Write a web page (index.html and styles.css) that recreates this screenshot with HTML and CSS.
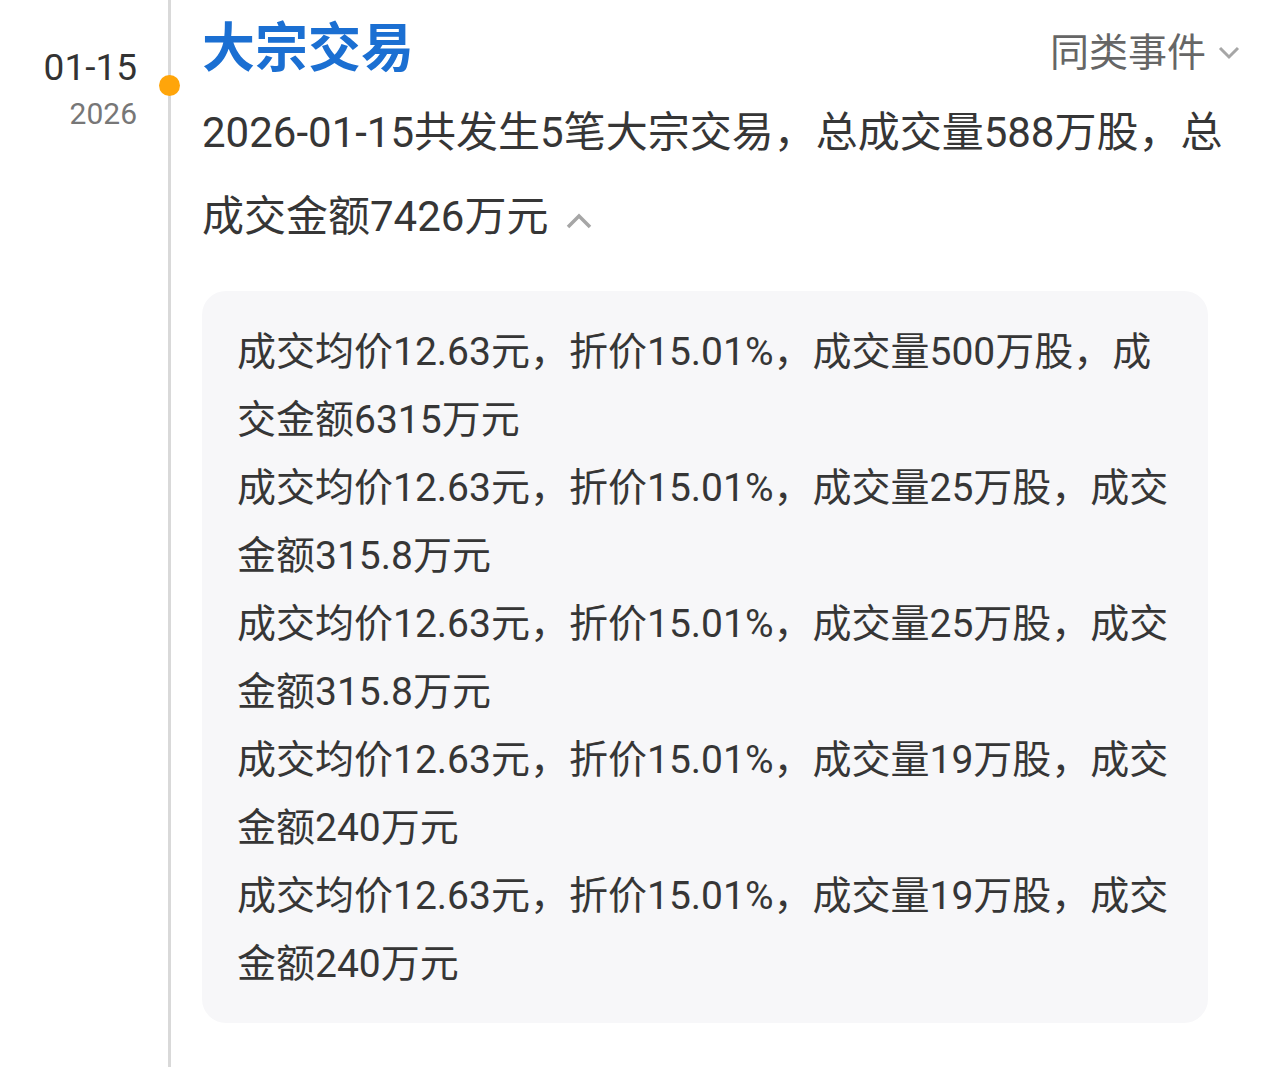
FILE: index.html
```html
<!DOCTYPE html>
<html lang="zh-CN">
<head>
<meta charset="utf-8">
<title>大宗交易</title>
<link rel="stylesheet" href="styles.css">
</head>
<body>
<div class="item">
  <div class="date-col">
    <div class="date-md">01-15</div>
    <div class="date-y">2026</div>
  </div>
  <div class="rail"><span class="dot"></span></div>
  <div class="content">
    <div class="header">
      <h1 class="title">大宗交易</h1>
      <div class="similar">同类事件<svg class="chev-down" width="22" height="14" viewBox="0 0 22 14"><path d="M2 2 L11 11 L20 2" fill="none" stroke="#a6a6a6" stroke-width="3"/></svg></div>
    </div>
    <p class="desc">2026-01-15共发生5笔大宗交易，总成交量588万股，总成交金额7426万元<svg class="chev-up" width="26" height="16" viewBox="0 0 26 16"><path d="M2 14 L13 3 L24 14" fill="none" stroke="#a6a6a6" stroke-width="3.5"/></svg></p>
    <div class="detail">
      <p class="trade">成交均价12.63元，折价15.01%，成交量500万股，成交金额6315万元</p>
      <p class="trade">成交均价12.63元，折价15.01%，成交量25万股，成交金额315.8万元</p>
      <p class="trade">成交均价12.63元，折价15.01%，成交量25万股，成交金额315.8万元</p>
      <p class="trade">成交均价12.63元，折价15.01%，成交量19万股，成交金额240万元</p>
      <p class="trade">成交均价12.63元，折价15.01%，成交量19万股，成交金额240万元</p>
    </div>
  </div>
</div>
</body>
</html>
```
FILE: styles.css
```css
html, body {
  margin: 0;
  padding: 0;
  background: #ffffff;
}
body {
  font-family: Roboto, "Noto Sans CJK SC", sans-serif;
  color: #363636;
}
.item {
  display: flex;
  min-height: 1067px;
}
.date-col {
  width: 137px;
  flex: none;
  text-align: right;
  padding-top: 46px;
}
.date-md {
  font-size: 37px;
  line-height: 44px;
  color: #333333;
}
.date-y {
  font-size: 30px;
  line-height: 40px;
  margin-top: 4px;
  color: #777777;
}
.rail {
  width: 64px;
  flex: none;
  display: flex;
  flex-direction: column;
  align-items: center;
  background: linear-gradient(#d9d9d9, #d9d9d9) no-repeat center top / 3px 100%;
}
.dot {
  display: block;
  width: 21px;
  height: 21px;
  border-radius: 50%;
  background: #ffa50a;
  margin-top: 75px;
}
.content {
  flex: 1;
  padding: 19px 40px 0 1px;
}
.header {
  display: flex;
  justify-content: space-between;
  align-items: center;
  height: 60px;
}
.title {
  margin: 0;
  font-size: 53px;
  line-height: 60px;
  font-weight: 700;
  color: #1b6fd2;
}
.similar {
  display: flex;
  align-items: center;
  gap: 12px;
  font-size: 39px;
  line-height: 50px;
  color: #666666;
  padding-top: 8px;
}
.desc {
  margin: 12px 0 0;
  font-size: 42px;
  line-height: 84px;
  color: #363636;
}
.chev-up {
  margin-left: 18px;
  vertical-align: 2px;
}
.detail {
  margin: 32px 32px 0 0;
  background: #f7f7f9;
  border-radius: 24px;
  padding: 27px 35px 25px 35px;
}
.trade {
  margin: 0;
  font-size: 39px;
  line-height: 68px;
  color: #363636;
}
```
